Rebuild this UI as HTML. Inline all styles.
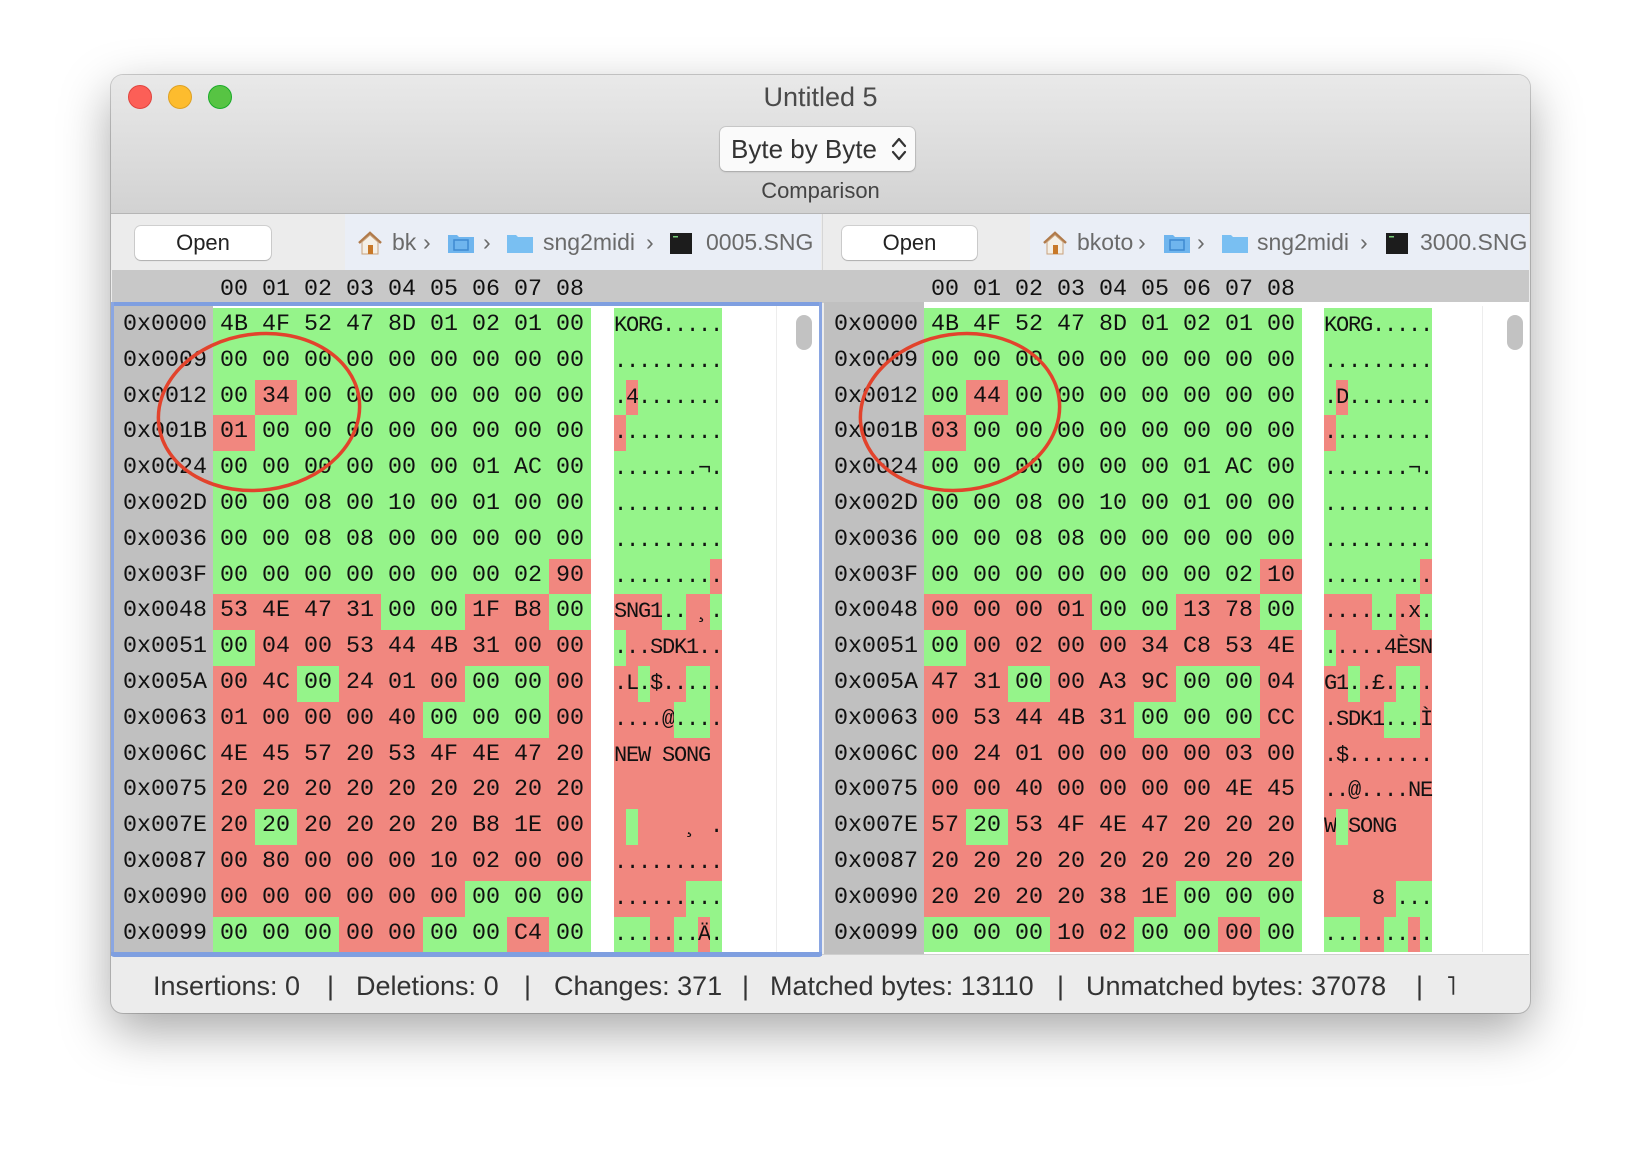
<!DOCTYPE html>
<html><head><meta charset="utf-8">
<style>
*{margin:0;padding:0;box-sizing:border-box}
body{width:1642px;height:1162px;background:#fff;position:relative;overflow:hidden;font-family:"Liberation Sans",sans-serif}
.abs{position:absolute}
#win{position:absolute;left:111px;top:75px;width:1419px;height:938px;border-radius:12px;background:#ececec;box-shadow:0 18px 50px rgba(0,0,0,.35),0 0 0 1px rgba(0,0,0,.18);overflow:hidden}
.light{position:absolute;width:24px;height:24px;border-radius:50%;top:10px}
.mono{font-family:"Liberation Mono",monospace;color:#111}
.row{position:absolute;height:35.8px;line-height:35.8px;white-space:pre}
.row span{display:inline-block;height:35.8px;vertical-align:top}
.hx{font-size:23.33px}
.hx span{padding:0 7px}
.as{font-size:22px;letter-spacing:-1.2px}
.g{background:#95f48a}.r{background:#f1877f}
.btn{position:absolute;background:#fff;border-radius:6px;box-shadow:0 0 0 1px rgba(0,0,0,.12),0 1px 1px rgba(0,0,0,.15);font-size:22px;color:#222;text-align:center}
.pt{position:absolute;font-size:23px;color:#6a6a6a;top:0;line-height:56px}
.st{position:absolute;font-size:27px;color:#333;top:966px;line-height:40px}
</style></head><body>
<div id="win">
 <div class="abs" style="left:0;top:0;width:1419px;height:139px;background:linear-gradient(#e9e9e9,#d2d2d2);border-bottom:1px solid #b5b5b5"></div>
 <div class="light" style="left:17px;top:10px;background:#fc5f57;border:1px solid #e0443e"></div>
 <div class="light" style="left:57px;top:10px;background:#fdbc2e;border:1px solid #dea123"></div>
 <div class="light" style="left:97px;top:10px;background:#57c443;border:1px solid #1aab29"></div>
 <div class="abs" style="left:0;width:1419px;top:7px;text-align:center;font-size:27px;color:#4a4a4a">Untitled 5</div>
 <div class="abs" style="left:609px;top:52px;width:195px;height:44px;background:#fafafa;border-radius:6px;box-shadow:0 0 0 1px rgba(0,0,0,.1),0 1px 2px rgba(0,0,0,.15);font-size:26px;color:#333;line-height:44px;padding-left:11px">Byte by Byte
  <svg class="abs" style="left:171px;top:9px" width="16" height="26" viewBox="0 0 16 26"><path d="M2 10 L8 3 L14 10 M2 16 L8 23 L14 16" fill="none" stroke="#333" stroke-width="2.2" stroke-linecap="round" stroke-linejoin="round"/></svg></div>
 <div class="abs" style="left:0;width:1419px;top:103px;text-align:center;font-size:22px;color:#444">Comparison</div>
</div>

<!-- path rows -->
<div class="abs" style="left:112px;top:214px;width:1417px;height:56px;background:#ececec"></div>
<div class="abs" style="left:345px;top:214px;width:476px;height:56px;background:#eaeef6"></div>
<div class="abs" style="left:1030px;top:214px;width:499px;height:56px;background:#eaeef6"></div>
<div class="abs" style="left:822px;top:214px;width:1px;height:56px;background:#d6d6d6"></div>
<div class="btn" style="left:135px;top:226px;width:136px;height:34px;line-height:34px">Open</div>
<div class="btn" style="left:842px;top:226px;width:135px;height:34px;line-height:34px">Open</div>

<div class="abs" style="left:0;top:214px;width:1642px;height:56px">
 <svg class="abs" style="left:357px;top:16px" width="26" height="26" viewBox="0 0 26 26"><path d="M2 13 L13 3 L24 13" fill="none" stroke="#b07a4a" stroke-width="2.5"/><path d="M5 12 L13 5 L21 12 V24 H5Z" fill="#f4efe6" stroke="#c9a27c"/><rect x="11" y="15" width="5" height="9" fill="#c87828"/></svg>
 <div class="pt" style="left:392px">bk</div><div class="pt" style="left:423px">›</div>
 <svg class="abs" style="left:447px;top:18px" width="28" height="22" viewBox="0 0 28 22"><path d="M1 3 H10 L12 5 H27 V21 H1Z" fill="#6fb5ee"/><rect x="7" y="8" width="14" height="10" fill="none" stroke="#3f8ad0" stroke-width="1.5"/></svg>
 <div class="pt" style="left:483px">›</div>
 <svg class="abs" style="left:506px;top:18px" width="28" height="22" viewBox="0 0 28 22"><path d="M1 3 H10 L12 5 H27 V21 H1Z" fill="#79bff2"/></svg>
 <div class="pt" style="left:543px">sng2midi</div><div class="pt" style="left:646px">›</div>
 <svg class="abs" style="left:670px;top:19px" width="22" height="21" viewBox="0 0 22 21"><rect width="22" height="21" fill="#1c1c1c"/><rect x="3" y="3" width="5" height="1.5" fill="#7c7"/></svg>
 <div class="pt" style="left:706px">0005.SNG</div>

 <svg class="abs" style="left:1042px;top:16px" width="26" height="26" viewBox="0 0 26 26"><path d="M2 13 L13 3 L24 13" fill="none" stroke="#b07a4a" stroke-width="2.5"/><path d="M5 12 L13 5 L21 12 V24 H5Z" fill="#f4efe6" stroke="#c9a27c"/><rect x="11" y="15" width="5" height="9" fill="#c87828"/></svg>
 <div class="pt" style="left:1077px">bkoto</div><div class="pt" style="left:1138px">›</div>
 <svg class="abs" style="left:1163px;top:18px" width="28" height="22" viewBox="0 0 28 22"><path d="M1 3 H10 L12 5 H27 V21 H1Z" fill="#6fb5ee"/><rect x="7" y="8" width="14" height="10" fill="none" stroke="#3f8ad0" stroke-width="1.5"/></svg>
 <div class="pt" style="left:1197px">›</div>
 <svg class="abs" style="left:1221px;top:18px" width="28" height="22" viewBox="0 0 28 22"><path d="M1 3 H10 L12 5 H27 V21 H1Z" fill="#79bff2"/></svg>
 <div class="pt" style="left:1257px">sng2midi</div><div class="pt" style="left:1360px">›</div>
 <svg class="abs" style="left:1386px;top:19px" width="22" height="21" viewBox="0 0 22 21"><rect width="22" height="21" fill="#1c1c1c"/><rect x="3" y="3" width="5" height="1.5" fill="#7c7"/></svg>
 <div class="pt" style="left:1420px">3000.SNG</div>
</div>

<!-- header row -->
<div class="abs" style="left:112px;top:270px;width:1417px;height:33px;background:#c8c8c8"></div>
<div class="row mono hx" style="left:213px;top:273px"><span>00 01 02 03 04 05 06 07 08</span></div>
<div class="row mono hx" style="left:924px;top:273px"><span>00 01 02 03 04 05 06 07 08</span></div>

<!-- panes backgrounds -->
<div class="abs" style="left:112px;top:302px;width:710px;height:654px;background:#fff"></div>
<div class="abs" style="left:112px;top:302px;width:101px;height:654px;background:#c0c0c0"></div>
<div class="abs" style="left:824px;top:302px;width:705px;height:652px;background:#fff"></div>
<div class="abs" style="left:824px;top:302px;width:100px;height:652px;background:#c0c0c0"></div>
<div class="abs" style="left:776px;top:306px;width:1px;height:646px;background:#ededed"></div>
<div class="abs" style="left:1482px;top:306px;width:1px;height:646px;background:#ededed"></div>
<div class="abs" style="left:796px;top:315px;width:16px;height:35px;border-radius:8px;background:#c2c2c2"></div>
<div class="abs" style="left:1507px;top:315px;width:16px;height:35px;border-radius:8px;background:#c2c2c2"></div>

<!-- left data -->
<div class="mono">
<div class="row hx" style="left:123px;top:308px">0x0000</div>
<div class="row hx" style="left:123px;top:343.8px">0x0009</div>
<div class="row hx" style="left:123px;top:379.6px">0x0012</div>
<div class="row hx" style="left:123px;top:415.4px">0x001B</div>
<div class="row hx" style="left:123px;top:451.2px">0x0024</div>
<div class="row hx" style="left:123px;top:487px">0x002D</div>
<div class="row hx" style="left:123px;top:522.8px">0x0036</div>
<div class="row hx" style="left:123px;top:558.6px">0x003F</div>
<div class="row hx" style="left:123px;top:594.4px">0x0048</div>
<div class="row hx" style="left:123px;top:630.2px">0x0051</div>
<div class="row hx" style="left:123px;top:666px">0x005A</div>
<div class="row hx" style="left:123px;top:701.8px">0x0063</div>
<div class="row hx" style="left:123px;top:737.6px">0x006C</div>
<div class="row hx" style="left:123px;top:773.4px">0x0075</div>
<div class="row hx" style="left:123px;top:809.2px">0x007E</div>
<div class="row hx" style="left:123px;top:845px">0x0087</div>
<div class="row hx" style="left:123px;top:880.8px">0x0090</div>
<div class="row hx" style="left:123px;top:916.6px">0x0099</div>

<div class="row hx" style="left:213px;top:308px"><span class="g">4B 4F 52 47 8D 01 02 01 00</span></div>
<div class="row hx" style="left:213px;top:343.8px"><span class="g">00 00 00 00 00 00 00 00 00</span></div>
<div class="row hx" style="left:213px;top:379.6px"><span class="g">00</span><span class="r">34</span><span class="g">00 00 00 00 00 00 00</span></div>
<div class="row hx" style="left:213px;top:415.4px"><span class="r">01</span><span class="g">00 00 00 00 00 00 00 00</span></div>
<div class="row hx" style="left:213px;top:451.2px"><span class="g">00 00 00 00 00 00 01 AC 00</span></div>
<div class="row hx" style="left:213px;top:487px"><span class="g">00 00 08 00 10 00 01 00 00</span></div>
<div class="row hx" style="left:213px;top:522.8px"><span class="g">00 00 08 08 00 00 00 00 00</span></div>
<div class="row hx" style="left:213px;top:558.6px"><span class="g">00 00 00 00 00 00 00 02</span><span class="r">90</span></div>
<div class="row hx" style="left:213px;top:594.4px"><span class="r">53 4E 47 31</span><span class="g">00 00</span><span class="r">1F B8</span><span class="g">00</span></div>
<div class="row hx" style="left:213px;top:630.2px"><span class="g">00</span><span class="r">04 00 53 44 4B 31 00 00</span></div>
<div class="row hx" style="left:213px;top:666px"><span class="r">00 4C</span><span class="g">00</span><span class="r">24 01 00</span><span class="g">00 00</span><span class="r">00</span></div>
<div class="row hx" style="left:213px;top:701.8px"><span class="r">01 00 00 00 40</span><span class="g">00 00 00</span><span class="r">00</span></div>
<div class="row hx" style="left:213px;top:737.6px"><span class="r">4E 45 57 20 53 4F 4E 47 20</span></div>
<div class="row hx" style="left:213px;top:773.4px"><span class="r">20 20 20 20 20 20 20 20 20</span></div>
<div class="row hx" style="left:213px;top:809.2px"><span class="r">20</span><span class="g">20</span><span class="r">20 20 20 20 B8 1E 00</span></div>
<div class="row hx" style="left:213px;top:845px"><span class="r">00 80 00 00 00 10 02 00 00</span></div>
<div class="row hx" style="left:213px;top:880.8px"><span class="r">00 00 00 00 00 00</span><span class="g">00 00 00</span></div>
<div class="row hx" style="left:213px;top:916.6px"><span class="g">00 00 00</span><span class="r">00 00</span><span class="g">00 00</span><span class="r">C4</span><span class="g">00</span></div>

<div class="row as" style="left:614px;top:308px"><span class="g">KORG.....</span></div>
<div class="row as" style="left:614px;top:343.8px"><span class="g">.........</span></div>
<div class="row as" style="left:614px;top:379.6px"><span class="g">.</span><span class="r">4</span><span class="g">.......</span></div>
<div class="row as" style="left:614px;top:415.4px"><span class="r">.</span><span class="g">........</span></div>
<div class="row as" style="left:614px;top:451.2px"><span class="g">.......¬.</span></div>
<div class="row as" style="left:614px;top:487px"><span class="g">.........</span></div>
<div class="row as" style="left:614px;top:522.8px"><span class="g">.........</span></div>
<div class="row as" style="left:614px;top:558.6px"><span class="g">........</span><span class="r">.</span></div>
<div class="row as" style="left:614px;top:594.4px"><span class="r">SNG1</span><span class="g">..</span><span class="r"> ¸</span><span class="g">.</span></div>
<div class="row as" style="left:614px;top:630.2px"><span class="g">.</span><span class="r">..SDK1..</span></div>
<div class="row as" style="left:614px;top:666px"><span class="r">.L</span><span class="g">.</span><span class="r">$..</span><span class="g">..</span><span class="r">.</span></div>
<div class="row as" style="left:614px;top:701.8px"><span class="r">....@</span><span class="g">...</span><span class="r">.</span></div>
<div class="row as" style="left:614px;top:737.6px"><span class="r">NEW SONG </span></div>
<div class="row as" style="left:614px;top:773.4px"><span class="r">         </span></div>
<div class="row as" style="left:614px;top:809.2px"><span class="r"> </span><span class="g"> </span><span class="r">    ¸ .</span></div>
<div class="row as" style="left:614px;top:845px"><span class="r">.........</span></div>
<div class="row as" style="left:614px;top:880.8px"><span class="r">......</span><span class="g">...</span></div>
<div class="row as" style="left:614px;top:916.6px"><span class="g">...</span><span class="r">..</span><span class="g">..</span><span class="r">Ä</span><span class="g">.</span></div>
</div>

<!-- right data -->
<div class="mono">
<div class="row hx" style="left:834px;top:308px">0x0000</div>
<div class="row hx" style="left:834px;top:343.8px">0x0009</div>
<div class="row hx" style="left:834px;top:379.6px">0x0012</div>
<div class="row hx" style="left:834px;top:415.4px">0x001B</div>
<div class="row hx" style="left:834px;top:451.2px">0x0024</div>
<div class="row hx" style="left:834px;top:487px">0x002D</div>
<div class="row hx" style="left:834px;top:522.8px">0x0036</div>
<div class="row hx" style="left:834px;top:558.6px">0x003F</div>
<div class="row hx" style="left:834px;top:594.4px">0x0048</div>
<div class="row hx" style="left:834px;top:630.2px">0x0051</div>
<div class="row hx" style="left:834px;top:666px">0x005A</div>
<div class="row hx" style="left:834px;top:701.8px">0x0063</div>
<div class="row hx" style="left:834px;top:737.6px">0x006C</div>
<div class="row hx" style="left:834px;top:773.4px">0x0075</div>
<div class="row hx" style="left:834px;top:809.2px">0x007E</div>
<div class="row hx" style="left:834px;top:845px">0x0087</div>
<div class="row hx" style="left:834px;top:880.8px">0x0090</div>
<div class="row hx" style="left:834px;top:916.6px">0x0099</div>

<div class="row hx" style="left:924px;top:308px"><span class="g">4B 4F 52 47 8D 01 02 01 00</span></div>
<div class="row hx" style="left:924px;top:343.8px"><span class="g">00 00 00 00 00 00 00 00 00</span></div>
<div class="row hx" style="left:924px;top:379.6px"><span class="g">00</span><span class="r">44</span><span class="g">00 00 00 00 00 00 00</span></div>
<div class="row hx" style="left:924px;top:415.4px"><span class="r">03</span><span class="g">00 00 00 00 00 00 00 00</span></div>
<div class="row hx" style="left:924px;top:451.2px"><span class="g">00 00 00 00 00 00 01 AC 00</span></div>
<div class="row hx" style="left:924px;top:487px"><span class="g">00 00 08 00 10 00 01 00 00</span></div>
<div class="row hx" style="left:924px;top:522.8px"><span class="g">00 00 08 08 00 00 00 00 00</span></div>
<div class="row hx" style="left:924px;top:558.6px"><span class="g">00 00 00 00 00 00 00 02</span><span class="r">10</span></div>
<div class="row hx" style="left:924px;top:594.4px"><span class="r">00 00 00 01</span><span class="g">00 00</span><span class="r">13 78</span><span class="g">00</span></div>
<div class="row hx" style="left:924px;top:630.2px"><span class="g">00</span><span class="r">00 02 00 00 34 C8 53 4E</span></div>
<div class="row hx" style="left:924px;top:666px"><span class="r">47 31</span><span class="g">00</span><span class="r">00 A3 9C</span><span class="g">00 00</span><span class="r">04</span></div>
<div class="row hx" style="left:924px;top:701.8px"><span class="r">00 53 44 4B 31</span><span class="g">00 00 00</span><span class="r">CC</span></div>
<div class="row hx" style="left:924px;top:737.6px"><span class="r">00 24 01 00 00 00 00 03 00</span></div>
<div class="row hx" style="left:924px;top:773.4px"><span class="r">00 00 40 00 00 00 00 4E 45</span></div>
<div class="row hx" style="left:924px;top:809.2px"><span class="r">57</span><span class="g">20</span><span class="r">53 4F 4E 47 20 20 20</span></div>
<div class="row hx" style="left:924px;top:845px"><span class="r">20 20 20 20 20 20 20 20 20</span></div>
<div class="row hx" style="left:924px;top:880.8px"><span class="r">20 20 20 20 38 1E</span><span class="g">00 00 00</span></div>
<div class="row hx" style="left:924px;top:916.6px"><span class="g">00 00 00</span><span class="r">10 02</span><span class="g">00 00</span><span class="r">00</span><span class="g">00</span></div>

<div class="row as" style="left:1324px;top:308px"><span class="g">KORG.....</span></div>
<div class="row as" style="left:1324px;top:343.8px"><span class="g">.........</span></div>
<div class="row as" style="left:1324px;top:379.6px"><span class="g">.</span><span class="r">D</span><span class="g">.......</span></div>
<div class="row as" style="left:1324px;top:415.4px"><span class="r">.</span><span class="g">........</span></div>
<div class="row as" style="left:1324px;top:451.2px"><span class="g">.......¬.</span></div>
<div class="row as" style="left:1324px;top:487px"><span class="g">.........</span></div>
<div class="row as" style="left:1324px;top:522.8px"><span class="g">.........</span></div>
<div class="row as" style="left:1324px;top:558.6px"><span class="g">........</span><span class="r">.</span></div>
<div class="row as" style="left:1324px;top:594.4px"><span class="r">....</span><span class="g">..</span><span class="r">.x</span><span class="g">.</span></div>
<div class="row as" style="left:1324px;top:630.2px"><span class="g">.</span><span class="r">....4ÈSN</span></div>
<div class="row as" style="left:1324px;top:666px"><span class="r">G1</span><span class="g">.</span><span class="r">.£.</span><span class="g">..</span><span class="r">.</span></div>
<div class="row as" style="left:1324px;top:701.8px"><span class="r">.SDK1</span><span class="g">...</span><span class="r">Ì</span></div>
<div class="row as" style="left:1324px;top:737.6px"><span class="r">.$.......</span></div>
<div class="row as" style="left:1324px;top:773.4px"><span class="r">..@....NE</span></div>
<div class="row as" style="left:1324px;top:809.2px"><span class="r">W</span><span class="g"> </span><span class="r">SONG   </span></div>
<div class="row as" style="left:1324px;top:845px"><span class="r">         </span></div>
<div class="row as" style="left:1324px;top:880.8px"><span class="r">    8 </span><span class="g">...</span></div>
<div class="row as" style="left:1324px;top:916.6px"><span class="g">...</span><span class="r">..</span><span class="g">..</span><span class="r">.</span><span class="g">.</span></div>
</div>

<!-- active pane border -->
<div class="abs" style="left:111px;top:302px;width:711px;height:4px;background:#7f9fe0"></div>
<div class="abs" style="left:111px;top:302px;width:3px;height:654px;background:#8aa6e2"></div>
<div class="abs" style="left:819px;top:302px;width:3px;height:654px;background:#8aa6e2"></div>
<div class="abs" style="left:111px;top:952px;width:711px;height:5px;background:#7f9fe0;border-radius:0 0 3px 3px"></div>
<div class="abs" style="left:822px;top:954px;width:707px;height:1px;background:#cfcfcf"></div>

<!-- red circles -->
<svg class="abs" style="left:0;top:0" width="1642" height="1162" viewBox="0 0 1642 1162">
 <ellipse cx="259" cy="412" rx="101" ry="78" transform="rotate(-8 259 412)" fill="none" stroke="#e2432c" stroke-width="3.5"/>
 <ellipse cx="960" cy="412" rx="100" ry="78" transform="rotate(-8 960 412)" fill="none" stroke="#e2432c" stroke-width="3.5"/>
</svg>

<!-- status -->
<div class="st" style="left:153px">Insertions: 0</div>
<div class="st" style="left:327px">|</div>
<div class="st" style="left:356px">Deletions: 0</div>
<div class="st" style="left:524px">|</div>
<div class="st" style="left:554px">Changes: 371</div>
<div class="st" style="left:742px">|</div>
<div class="st" style="left:770px">Matched bytes: 13110</div>
<div class="st" style="left:1057px">|</div>
<div class="st" style="left:1086px">Unmatched bytes: 37078</div>
<div class="st" style="left:1416px">|</div>
<div class="st" style="left:1446px">˥</div>
</body></html>
